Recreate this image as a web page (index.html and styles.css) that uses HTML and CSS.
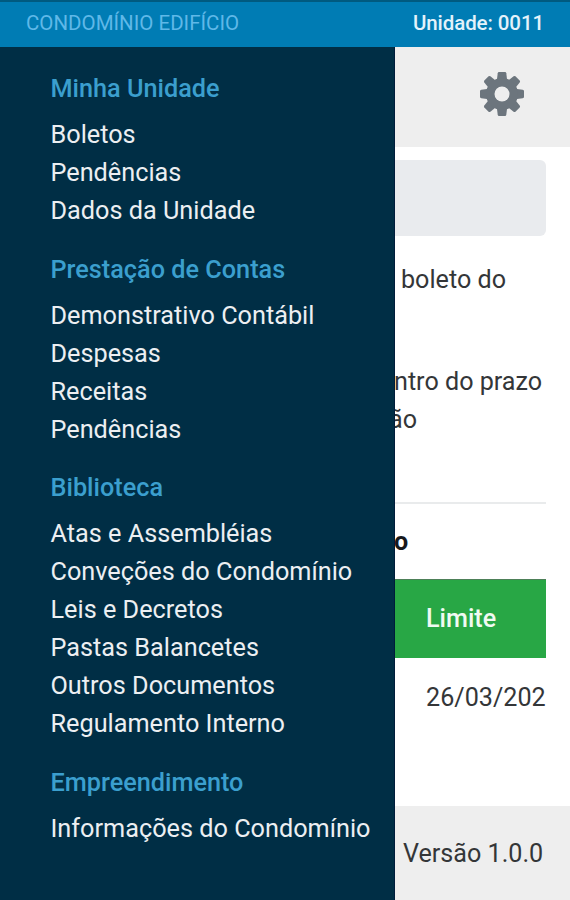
FILE: index.html
```html
<!DOCTYPE html>
<html lang="pt-BR">
<head>
    <meta charset="UTF-8">
    <meta name="viewport" content="width=device-width, initial-scale=1.0">
    <title>Condomínio</title>
    <link rel="stylesheet" href="styles.css">
</head>
<body>
    <header class="topbar">
        <span class="condo-name">CONDOMÍNIO EDIFÍCIO</span>
        <span class="unit">Unidade: 0011</span>
    </header>
    <div class="layout">
        <nav class="menu">
            <h2>Minha Unidade</h2>
            <ul>
                <li><a>Boletos</a></li>
                <li><a>Pendências</a></li>
                <li><a>Dados da Unidade</a></li>
            </ul>
            <h2>Prestação de Contas</h2>
            <ul>
                <li><a>Demonstrativo Contábil</a></li>
                <li><a>Despesas</a></li>
                <li><a>Receitas</a></li>
                <li><a>Pendências</a></li>
            </ul>
            <h2>Biblioteca</h2>
            <ul>
                <li><a>Atas e Assembléias</a></li>
                <li><a>Conveções do Condomínio</a></li>
                <li><a>Leis e Decretos</a></li>
                <li><a>Pastas Balancetes</a></li>
                <li><a>Outros Documentos</a></li>
                <li><a>Regulamento Interno</a></li>
            </ul>
            <h2>Empreendimento</h2>
            <ul>
                <li><a>Informações do Condomínio</a></li>
            </ul>
        </nav>
        <div class="page">
            <div class="toolbar">
                <svg class="gear" viewBox="-22 -22 44 44" width="44" height="44">
                    <defs>
                        <path id="tooth" d="M-5.200-13L-4.300-20.700Q-4.100-22-3-22H3Q4.100-22 4.300-20.700L5.200-13Z"/>
                    </defs>
                    <use href="#tooth"/>
                    <use href="#tooth" transform="rotate(45)"/>
                    <use href="#tooth" transform="rotate(90)"/>
                    <use href="#tooth" transform="rotate(135)"/>
                    <use href="#tooth" transform="rotate(180)"/>
                    <use href="#tooth" transform="rotate(225)"/>
                    <use href="#tooth" transform="rotate(270)"/>
                    <use href="#tooth" transform="rotate(315)"/>
                    <circle r="11.500" class="gear-ring"/>
                    <circle r="7.500" class="gear-hole"/>
                </svg>
            </div>
            <main class="content">
                <div class="box"></div>
                <p class="first">boleto do</p>
                <p class="second">ntro do prazo</p>
                <p class="third">ão</p>
                <div class="table-title">o</div>
                <div class="table-head">Limite</div>
                <div class="table-cell">26/03/202</div>
            </main>
            <footer class="footer">Versão 1.0.0</footer>
        </div>
    </div>
</body>
</html>
```

FILE: styles.css
```css
* {
    box-sizing: border-box;
}
body {
    margin: 0;
    height: 900px;
    display: flex;
    flex-direction: column;
    overflow: hidden;
    font-family: Roboto, sans-serif;
    font-size: 25.15px;
    line-height: 38px;
    color: #343638;
    background: #fff;
}
.topbar {
    display: flex;
    justify-content: space-between;
    height: 47px;
    padding: 2px 26px 0 26px;
    border-top: 2px solid #005a80;
    background: #007cb4;
    font-size: 20.5px;
}
.condo-name {
    color: #5fb8e8;
}
.unit {
    color: #e3f2fb;
    font-weight: 500;
    letter-spacing: -0.1px;
}
.layout {
    display: flex;
    flex: 1;
}
.menu {
    width: 395px;
    padding: 23px 0 0 50.500px;
    background: #002e45;
    border-right: 1px solid #001c3a;
    font-size: 25.25px;
    white-space: nowrap;
}
.menu h2 {
    margin: 0 0 8px;
    font-size: 25.25px;
    font-weight: 500;
    color: #3b9fce;
}
.menu ul {
    list-style: none;
    margin: 0 0 20.7px;
    padding: 0;
}
.menu a {
    color: #eceff2;
}
.page {
    flex: 1;
    display: flex;
    flex-direction: column;
    overflow: hidden;
    white-space: nowrap;
}
.toolbar {
    display: flex;
    justify-content: flex-end;
    height: 100px;
    padding: 25px 46px 0 0;
    background: #eee;
}
.gear {
    fill: #6c757d;
}
.gear-ring {
    fill: none;
    stroke: #6c757d;
    stroke-width: 9;
}
.gear-hole {
    fill: #eee;
}
.content {
    flex: 1;
    padding: 13px 24px 0 0;
}
.box {
    height: 76px;
    background: #e9ebee;
    border-radius: 0 6px 6px 0;
}
.content p {
    margin: 0;
}
.content .first {
    padding: 25px 0 0 6px;
}
.content .second {
    margin: 64px 0 0 -1px;
}
.content .third {
    margin: 0 0 63px -6px;
}
.table-title {
    height: 77px;
    padding-top: 19px;
    border-top: 2px solid #e9ebec;
    font-weight: 700;
    color: #17191b;
    text-indent: -1px;
}
.table-head {
    height: 79px;
    padding: 20px 0 0 31px;
    border-top: 1px solid #4d8058;
    background: #28a745;
    color: #f0faf2;
    font-weight: 500;
}
.table-cell {
    padding: 21px 0 0 31px;
}
.footer {
    height: 94px;
    padding: 29px 0 0 8px;
    background: #eee;
}
```
